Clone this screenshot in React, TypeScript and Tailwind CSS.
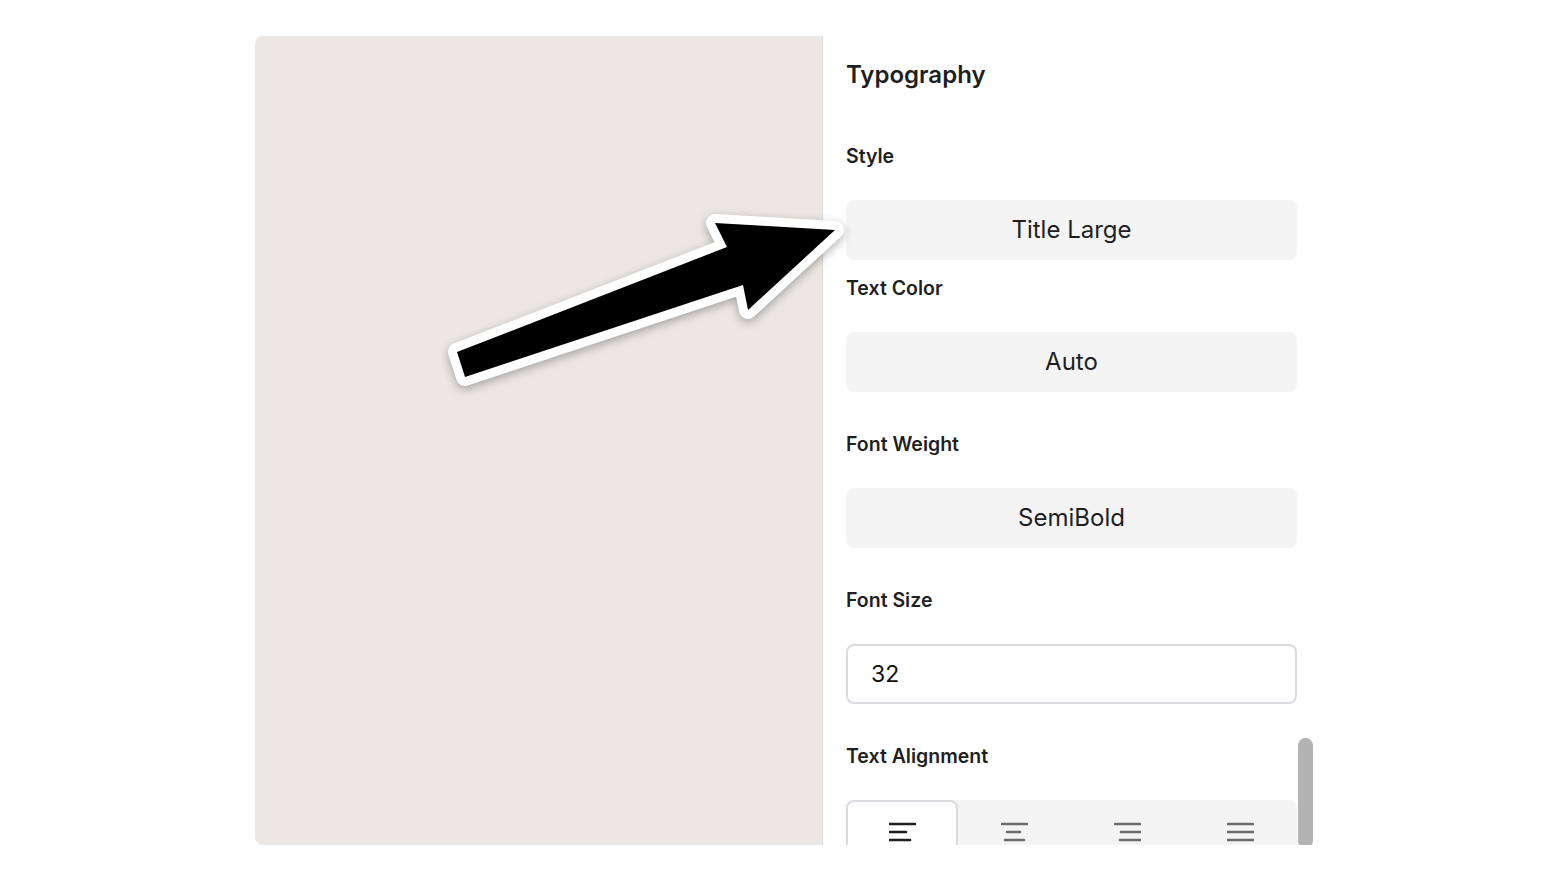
import React from 'react'

const font = { fontFamily: 'Inter, "Noto Sans", sans-serif' }

function AlignIcon({ kind, active }: { kind: 'left' | 'center' | 'right' | 'justify'; active?: boolean }) {
  // three lines: top full, middle and bottom vary
  const lines: Record<string, [number, number][]> = {
    left: [[0, 27], [0, 18], [0, 22]],
    center: [[0, 27], [5, 20], [3, 24]],
    right: [[0, 27], [6, 27], [5, 27]],
    justify: [[0, 27], [0, 27], [0, 27]],
  }
  return (
    <svg width="27" height="20" viewBox="0 0 27 20" fill="none">
      {lines[kind].map(([a, b], i) => (
        <line
          key={i}
          x1={a + 1}
          x2={b - 1}
          y1={2 + i * 8}
          y2={2 + i * 8}
          stroke={active ? '#1f1f1f' : '#6b6b6b'}
          strokeWidth="2.6"
          strokeLinecap="round"
        />
      ))}
    </svg>
  )
}

function Label({ children, className = '' }: { children: React.ReactNode; className?: string }) {
  return <div className={`text-[19.5px] leading-[24px] font-semibold text-[#1f1f1f] ${className}`}>{children}</div>
}

function Choice({ children }: { children: React.ReactNode }) {
  return (
    <div className="mt-[32px] h-[60px] w-[451px] rounded-lg bg-[#f4f4f4] flex items-center justify-center text-[24px] text-[#1f1f1f]">
      {children}
    </div>
  )
}

export default function App() {
  return (
    <div className="relative w-[1568px] h-[882px] bg-white overflow-hidden" style={font}>
      <div className="mx-auto mt-[36px] w-[1058px] h-[809px] flex overflow-hidden">
        {/* preview */}
        <div className="w-[568px] h-full bg-[#ebe7e4] rounded-l-lg border-r border-[#dedcda]"></div>

        {/* inspector */}
        <div className="relative flex-1 h-full pl-[23px] pt-[24px]">
          <div className="text-[24px] leading-[30px] font-semibold text-[#1f1f1f]">Typography</div>

          <Label className="mt-[54px]">Style</Label>
          <Choice>Title Large</Choice>

          <Label className="mt-[16px]">Text Color</Label>
          <Choice>Auto</Choice>

          <Label className="mt-[40px]">Font Weight</Label>
          <Choice>SemiBold</Choice>

          <Label className="mt-[40px]">Font Size</Label>
          <div className="mt-[32px] h-[60px] w-[451px] rounded-lg border-2 border-[#d8dbe0] bg-white flex items-center pl-[23px] text-[23px] text-[#111]">
            32
          </div>

          <Label className="mt-[40px]">Text Alignment</Label>
          <div className="mt-[32px] h-[60px] w-[451px] rounded-t-lg bg-[#f4f4f4] flex">
            <div className="w-[112px] h-full bg-white border-2 border-[#d8dbe0] rounded-t-lg flex justify-center pt-[20px]">
              <AlignIcon kind="left" active />
            </div>
            <div className="w-[113px] flex justify-center pt-[22px]">
              <AlignIcon kind="center" />
            </div>
            <div className="w-[113px] flex justify-center pt-[22px]">
              <AlignIcon kind="right" />
            </div>
            <div className="w-[113px] flex justify-center pt-[22px]">
              <AlignIcon kind="justify" />
            </div>
          </div>

          {/* scrollbar */}
          <div className="absolute right-0 top-[702px] w-[15px] h-[110px] rounded-full bg-[#b3b3b3]"></div>
        </div>
      </div>

      {/* annotation arrow */}
      <svg
        className="absolute left-0 top-0 pointer-events-none drop-shadow-[0_3px_5px_rgba(0,0,0,0.3)]"
        width="1568"
        height="882"
        viewBox="0 0 1568 882"
      >
        <polygon
          points="457,352 727,247 715,223 835,230 748,310 743,285 465,377"
          fill="white"
          stroke="white"
          strokeWidth="18"
          strokeLinejoin="round"
        />
        <polygon points="457,352 727,247 715,223 835,230 748,310 743,285 465,377" fill="black" />
      </svg>
    </div>
  )
}
